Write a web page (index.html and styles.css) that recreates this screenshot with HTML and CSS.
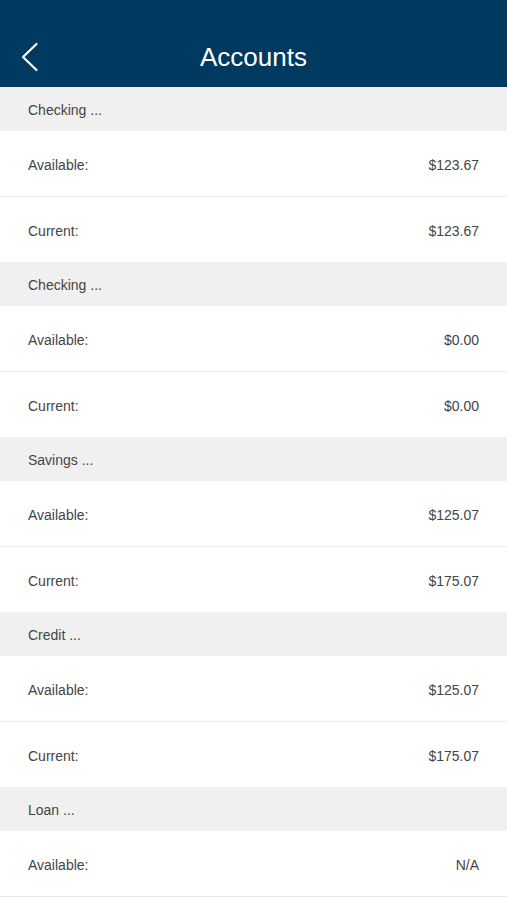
FILE: index.html
```html
<!DOCTYPE html>
<html lang="en">
<head>
    <meta charset="UTF-8">
    <meta name="viewport" content="width=device-width, initial-scale=1.0">
    <title>Accounts</title>
    <link rel="stylesheet" href="styles.css">
</head>
<body>
    <header class="nav-bar">
        <a class="back-btn" href="#">
            <svg width="18" height="30" viewBox="0 0 18 30">
                <polyline points="15.5,2 2,15 15.5,28" fill="none" stroke="#ffffff" stroke-width="2.2" stroke-linecap="round" stroke-linejoin="round"/>
            </svg>
        </a>
        <h1>Accounts</h1>
    </header>
    <main>
        <!-- Checking -->
        <section class="account">
            <div class="account-title">Checking ...</div>
            <div class="row"><span>Available:</span><span>$123.67</span></div>
            <div class="row"><span>Current:</span><span>$123.67</span></div>
        </section>

        <!-- Checking -->
        <section class="account">
            <div class="account-title">Checking ...</div>
            <div class="row"><span>Available:</span><span>$0.00</span></div>
            <div class="row"><span>Current:</span><span>$0.00</span></div>
        </section>

        <!-- Savings -->
        <section class="account">
            <div class="account-title">Savings ...</div>
            <div class="row"><span>Available:</span><span>$125.07</span></div>
            <div class="row"><span>Current:</span><span>$175.07</span></div>
        </section>

        <!-- Credit -->
        <section class="account">
            <div class="account-title">Credit ...</div>
            <div class="row"><span>Available:</span><span>$125.07</span></div>
            <div class="row"><span>Current:</span><span>$175.07</span></div>
        </section>

        <!-- Loan -->
        <section class="account">
            <div class="account-title">Loan ...</div>
            <div class="row"><span>Available:</span><span>N/A</span></div>
        </section>
    </main>
</body>
</html>
```

FILE: styles.css
```css
body {
    font-family: "Liberation Sans", Arial, sans-serif;
    background-color: #ffffff;
    margin: 0;
    padding: 0;
    color: #444444;
}
.nav-bar {
    background-color: #003a60;
    color: white;
    height: 87px;
    box-sizing: border-box;
    padding-top: 27px;
    display: flex;
    align-items: center;
    justify-content: center;
    position: relative;
}
.nav-bar h1 {
    font-size: 26px;
    font-weight: normal;
    margin: 0;
    line-height: 52px;
}
.back-btn {
    position: absolute;
    left: 21px;
    top: 42px;
    display: block;
    width: 18px;
    height: 30px;
}
.back-btn svg {
    display: block;
}
.account-title {
    background-color: #f0f0f0;
    height: 44px;
    box-sizing: border-box;
    padding: 2px 28px 0;
    display: flex;
    align-items: center;
    font-size: 14px;
    color: #444444;
}
.row {
    height: 65px;
    box-sizing: border-box;
    padding: 3px 28px 0;
    display: flex;
    align-items: center;
    justify-content: space-between;
    font-size: 14px;
    color: #444444;
}
.account-title + .row {
    height: 66px;
    border-bottom: 1px solid #e9e9e9;
}
.account:last-child .row {
    height: 66px;
    border-bottom: 1px solid #e9e9e9;
}
```
